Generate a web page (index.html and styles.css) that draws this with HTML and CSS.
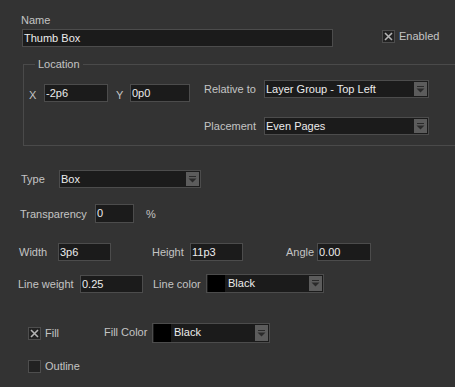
FILE: index.html
```html
<!DOCTYPE html>
<html lang="en">
<head>
  <meta charset="UTF-8">
  <title>Thumb Box Properties</title>
  <link rel="stylesheet" href="styles.css">
</head>
<body>
  <div class="dialog">
    <div class="name-block">
      <div class="name-col">
        <label class="lbl name-lbl">Name</label>
        <div class="field name-field">Thumb Box</div>
      </div>
      <label class="check enabled">
        <span class="box checked"><svg width="9" height="9" viewBox="0 0 9 9"><path d="M1 1L8 8M8 1L1 8" stroke="#b4b4b4" stroke-width="1.6"/></svg></span>
        <span class="check-text">Enabled</span>
      </label>
    </div>

    <fieldset class="group">
      <legend>Location</legend>
      <div class="group-body">
        <div class="xy">
          <span class="lbl xy-lbl x-lbl">X</span>
          <div class="field x-field">-2p6</div>
          <span class="lbl xy-lbl y-lbl">Y</span>
          <div class="field y-field">0p0</div>
        </div>
        <div class="anchor">
          <div class="row">
            <span class="lbl anchor-lbl">Relative to</span>
            <div class="field combo anchor-combo">
              <span class="combo-text">Layer Group - Top Left</span>
              <span class="arrow"><svg width="9" height="7" viewBox="0 0 9 7"><rect x="1" y="0" width="7" height="1" fill="#2a2a2a"/><path d="M0.5 2.5H8.5L4.5 6.5Z" fill="#2a2a2a"/></svg></span>
            </div>
          </div>
          <div class="row placement-row">
            <span class="lbl anchor-lbl">Placement</span>
            <div class="field combo anchor-combo">
              <span class="combo-text">Even Pages</span>
              <span class="arrow"><svg width="9" height="7" viewBox="0 0 9 7"><rect x="1" y="0" width="7" height="1" fill="#2a2a2a"/><path d="M0.5 2.5H8.5L4.5 6.5Z" fill="#2a2a2a"/></svg></span>
            </div>
          </div>
        </div>
      </div>
    </fieldset>

    <div class="row type-row">
      <span class="lbl type-lbl">Type</span>
      <div class="field combo type-combo">
        <span class="combo-text">Box</span>
        <span class="arrow"><svg width="9" height="7" viewBox="0 0 9 7"><rect x="1" y="0" width="7" height="1" fill="#2a2a2a"/><path d="M0.5 2.5H8.5L4.5 6.5Z" fill="#2a2a2a"/></svg></span>
      </div>
    </div>

    <div class="row trans-row">
      <span class="lbl trans-lbl">Transparency</span>
      <div class="field trans-field">0</div>
      <span class="lbl pct">%</span>
    </div>

    <div class="row size-row">
      <span class="lbl width-lbl">Width</span>
      <div class="field size-field">3p6</div>
      <span class="lbl height-lbl">Height</span>
      <div class="field size-field">11p3</div>
      <span class="lbl angle-lbl">Angle</span>
      <div class="field angle-field">0.00</div>
    </div>

    <div class="row line-row">
      <span class="lbl weight-lbl">Line weight</span>
      <div class="field weight-field">0.25</div>
      <span class="lbl linecolor-lbl">Line color</span>
      <div class="field combo color-combo">
        <span class="swatch"></span>
        <span class="combo-text">Black</span>
        <span class="arrow"><svg width="9" height="7" viewBox="0 0 9 7"><rect x="1" y="0" width="7" height="1" fill="#2a2a2a"/><path d="M0.5 2.5H8.5L4.5 6.5Z" fill="#2a2a2a"/></svg></span>
      </div>
    </div>

    <div class="row fill-row">
      <label class="check fill-check">
        <span class="box checked"><svg width="9" height="9" viewBox="0 0 9 9"><path d="M1 1L8 8M8 1L1 8" stroke="#b4b4b4" stroke-width="1.6"/></svg></span>
        <span class="check-text">Fill</span>
      </label>
      <span class="lbl fillcolor-lbl">Fill Color</span>
      <div class="field combo color-combo fill-combo">
        <span class="swatch"></span>
        <span class="combo-text">Black</span>
        <span class="arrow"><svg width="9" height="7" viewBox="0 0 9 7"><rect x="1" y="0" width="7" height="1" fill="#2a2a2a"/><path d="M0.5 2.5H8.5L4.5 6.5Z" fill="#2a2a2a"/></svg></span>
      </div>
    </div>

    <div class="row outline-row">
      <label class="check">
        <span class="box"></span>
        <span class="check-text">Outline</span>
      </label>
    </div>
  </div>
</body>
</html>
```

FILE: styles.css
```css
body {
  margin: 0;
  padding: 0;
  background: #333333;
  font-family: "Liberation Sans", Arial, sans-serif;
  font-size: 11px;
  color: #c4c4c4;
  overflow: hidden;
}

.dialog {
  width: 455px;
  height: 387px;
}

.lbl {
  color: #c4c4c4;
  line-height: 16px;
}

.row {
  display: flex;
  align-items: center;
}

.field {
  box-sizing: border-box;
  height: 18px;
  background: #1b1b1b;
  border: 1px solid #4c4c4c;
  color: #ececec;
  line-height: 16px;
  padding-left: 1px;
  white-space: nowrap;
}

.combo {
  display: flex;
  align-items: stretch;
}

.combo-text {
  flex: 1;
}

.arrow {
  width: 13px;
  margin: 1px 1px 1px 0;
  background: #5c5c5c;
  display: flex;
  align-items: center;
  justify-content: center;
}

.swatch {
  width: 17px;
  background: #000;
  margin-right: 3px;
}

/* name + enabled */
.name-block {
  display: flex;
  align-items: flex-end;
  padding-top: 12px;
}

.name-col {
  margin-left: 21px;
}

.name-lbl {
  display: block;
  margin-bottom: 1px;
}

.name-field {
  width: 311px;
  margin-left: 1px;
}

.check {
  display: flex;
  align-items: center;
}

.box {
  box-sizing: border-box;
  width: 13px;
  height: 13px;
  background: #222;
  border: 1px solid #4e4e4e;
  display: flex;
  align-items: center;
  justify-content: center;
}

.check-text {
  margin-left: 4px;
  line-height: 16px;
}

.enabled {
  margin-left: 49px;
  margin-bottom: 3px;
}

/* location group */
.group {
  box-sizing: border-box;
  margin: 9px 0 0 23px;
  padding: 0 0 10px 0;
  width: 432px;
  min-width: 0;
  border: 1px solid #4a4a4a;
  border-right: none;
}

.group legend {
  margin-left: 11px;
  padding: 0 3px;
  line-height: 16px;
  color: #c4c4c4;
}

.group-body {
  display: flex;
  align-items: flex-start;
}

.xy {
  display: flex;
  align-items: center;
  margin: 11px 0 0 5px;
}

.xy-lbl {
  padding-top: 4px;
}

.x-lbl {
  width: 15px;
}

.x-field {
  width: 64px;
}

.y-lbl {
  width: 14px;
  margin-left: 8px;
}

.y-field {
  width: 60px;
}

.anchor {
  margin: 8px 0 0 14px;
}

.anchor-lbl {
  width: 60px;
}

.anchor-combo {
  width: 165px;
}

.placement-row {
  margin-top: 19px;
}

/* lower fields */
.type-row {
  margin: 24px 0 0 21px;
}

.type-lbl {
  width: 38px;
}

.type-combo {
  width: 142px;
}

.trans-row {
  margin: 16px 0 0 20px;
}

.trans-lbl {
  width: 75px;
}

.trans-field {
  width: 39px;
  height: 19px;
}

.pct {
  margin-left: 12px;
}

.size-row {
  margin: 20px 0 0 19px;
}

.width-lbl {
  width: 39px;
}

.size-field {
  width: 53px;
}

.height-lbl {
  width: 38px;
  margin-left: 41px;
}

.angle-lbl {
  width: 31px;
  margin-left: 43px;
}

.angle-field {
  width: 54px;
}

.line-row {
  margin: 13px 0 0 18px;
}

.weight-lbl {
  width: 62px;
}

.weight-field {
  width: 63px;
}

.linecolor-lbl {
  width: 53px;
  margin-left: 10px;
}

.color-combo {
  width: 118px;
  height: 19px;
}

.fill-row {
  margin: 30px 0 0 28px;
}

.fill-check {
  width: 76px;
}

.fillcolor-lbl {
  width: 48px;
  padding-bottom: 3px;
}

.fill-combo {
  height: 20px;
}

.outline-row {
  margin: 15px 0 0 28px;
}
```
